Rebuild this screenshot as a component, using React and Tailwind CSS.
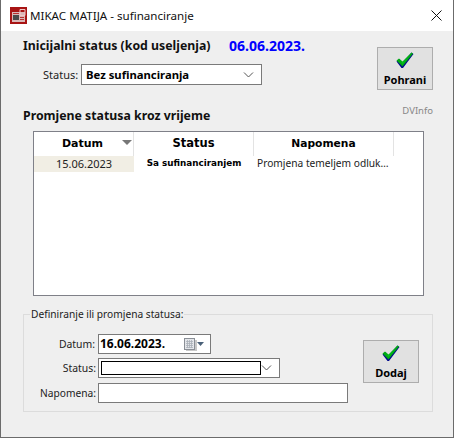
const ui = { fontFamily: '"Noto Sans", "Open Sans", sans-serif' };
const tah = { fontFamily: '"DejaVu Sans", sans-serif' };

function Check() {
  return (
    <svg width="18" height="17" viewBox="0 0 18 17" className="block">
      <path d="M0.5 9.5 L3.5 7 L6.5 10.5 L15.5 0.5 L17.5 2 L7 16 L5.5 16 Z" fill="#000a8c" />
      <path d="M0.5 8.5 L3 6.5 L6.5 9.5 L15.5 0.5 L17 1.5 L6.5 14.5 Z" fill="#00a814" />
      <path d="M3 7 L6.5 10.5 L15 2 L6.5 12 Z" fill="#00c820" />
    </svg>
  );
}

function Chevron() {
  return (
    <svg width="11" height="6" viewBox="0 0 11 6" className="block">
      <path d="M1 0.5 L5.5 5 L10 0.5" fill="none" stroke="#555" strokeWidth="1" />
    </svg>
  );
}

function AppIcon() {
  return (
    <svg width="17" height="17" viewBox="0 0 17 17" className="block">
      <rect width="17" height="17" fill="#a81414" />
      <rect x="2" y="5" width="13" height="10" fill="#d9b8b8" />
      <rect x="3" y="8" width="6" height="5" fill="#4a4a4a" />
      <path d="M10 2.5 H15 V8.5 H10 Z" fill="none" stroke="#f0c8c8" strokeWidth="1" />
      <path d="M10 10.5 H14 M10 12.5 H14 M3 6.5 H9" stroke="#b83030" strokeWidth="1" />
    </svg>
  );
}

function ActionButton({ label, className }) {
  return (
    <button
      className={`flex h-[43px] w-[56px] flex-col items-center border border-[#adadad] bg-[#e1e1e1] pt-[4px] ${className}`}
    >
      <Check />
      <span className="mt-[3px] text-[11px] leading-[15px] font-bold text-[#000]" style={ui}>
        {label}
      </span>
    </button>
  );
}

export default function App() {
  return (
    <div className="flex h-[438px] w-[454px] flex-col border-x border-b border-[#6b6b6b] bg-[#efefef] text-black" style={ui}>
      <div className="flex h-[31px] shrink-0 items-center bg-white pl-[9px]">
        <AppIcon />
        <span className="ml-[3px] text-[11.6px] leading-[16px] text-[#111]">MIKAC MATIJA - sufinanciranje</span>
        <svg width="11" height="11" viewBox="0 0 11 11" className="ml-auto mr-[11px]">
          <path d="M0.5 0.5 L10.5 10.5 M10.5 0.5 L0.5 10.5" stroke="#111" strokeWidth="1" fill="none" />
        </svg>
      </div>

      <div className="flex min-h-0 flex-1 flex-col pl-[22px] pr-[20px]">
        <div className="flex justify-between">
          <div>
            <div className="mt-[7px] flex h-[16px] items-center font-bold leading-[16px]">
              <span className="w-[206px] text-[12.3px] text-[#111]">Inicijalni status (kod useljenja)</span>
              <span className="text-[14px] text-[#0000ff]">06.06.2023.</span>
            </div>
            <div className="mt-[10px] flex items-center pl-[20px]">
              <span className="w-[38px] text-[11px] leading-[14px] text-[#222]">Status:</span>
              <div className="flex h-[21px] w-[181px] items-center justify-between border border-[#7a7a7a] bg-white pl-[4px] pr-[7px]">
                <span className="text-[11.3px] font-bold leading-[14px]">Bez sufinanciranja</span>
                <Chevron />
              </div>
            </div>
          </div>
          <div className="flex flex-col items-end">
            <ActionButton label="Pohrani" className="mt-[16px]" />
            <span className="mt-[14px] text-[9.5px] leading-[13px] text-[#888]">DVInfo</span>
          </div>
        </div>

        <div className="mt-[-9px] text-[12.3px] font-bold leading-[16px] text-[#111]">Promjene statusa kroz vrijeme</div>

        <div className="ml-[10px] mt-[7px] h-[165px] w-[391px] border border-[#7f8088] bg-white">
          <div className="flex h-[24px]">
            <div className="relative flex w-[100px] items-center justify-center border-r border-[#e3e3e3] pr-[2px] text-[11px] font-bold" style={tah}>
              Datum
              <span className="absolute right-[1px] top-[8px] h-0 w-0 border-x-[5px] border-t-[5px] border-x-transparent border-t-[#777]"></span>
            </div>
            <div className="flex w-[120px] items-center justify-center border-r border-[#e3e3e3] text-[11.5px] font-bold" style={tah}>Status</div>
            <div className="flex w-[140px] items-center justify-center border-r border-[#e3e3e3] text-[10.7px] font-bold" style={tah}>Napomena</div>
          </div>
          <div className="flex h-[16px] items-center">
            <div className="flex h-full w-[100px] items-center justify-center bg-[#f1eee4] text-[11px] text-[#222]">15.06.2023</div>
            <div className="flex w-[120px] justify-center text-[8.8px] font-bold" style={tah}>Sa sufinanciranjem</div>
            <div className="pl-[3px] text-[10.2px] text-[#222]">Promjena temeljem odluk…</div>
          </div>
        </div>

        <fieldset className="mt-[11px] h-[105px] w-[410px] border border-[#dcdcdc] pl-[4px]">
          <legend className="ml-[2px] px-[1px] text-[10.2px] leading-[14px] text-[#222]">Definiranje ili promjena statusa:</legend>
          <div className="flex">
            <div className="flex flex-col">
              <div className="mt-[13px] flex items-center">
                <span className="w-[70px] pr-[3px] text-right text-[10.4px] leading-[14px] text-[#222]">Datum:</span>
                <div className="flex h-[20px] w-[113px] items-center border border-[#7a7a7a] bg-white pl-[1px]">
                  <span className="text-[12px] font-bold leading-[14px]">16.06.2023.</span>
                  <svg width="21" height="13" viewBox="0 0 21 13" className="ml-auto mr-[5px]">
                    <rect x="2" y="2" width="11" height="11" fill="#c8c8c8" />
                    <rect x="0.5" y="0.5" width="10" height="11" fill="#e4e6ea" stroke="#8a8f96" />
                    <path d="M2 3.5 H9 M2 5.5 H9 M2 7.5 H9 M2 9.5 H9 M3.5 2 V10 M5.5 2 V10 M7.5 2 V10" stroke="#aab0b8" strokeWidth="0.8" />
                    <path d="M13 4 H20 L16.5 8 Z" fill="#4a6078" />
                  </svg>
                </div>
              </div>
              <div className="mt-[4px] flex items-center">
                <span className="w-[70px] pr-[2px] text-right text-[10.4px] leading-[14px] text-[#222]">Status:</span>
                <div className="flex h-[20px] w-[182px] items-center border border-[#7a7a7a] bg-white pl-[2px] pr-[7px]">
                  <div className="h-[14px] w-[160px] border border-black"></div>
                  <div className="ml-auto"><Chevron /></div>
                </div>
              </div>
              <div className="mt-[5px] flex items-center">
                <span className="w-[70px] pr-[2px] text-right text-[10.2px] leading-[14px] text-[#222]">Napomena:</span>
                <div className="h-[20px] w-[250px] border border-[#7a7a7a] bg-white"></div>
              </div>
            </div>
            <ActionButton label="Dodaj" className="ml-[15px] mt-[19px]" />
          </div>
        </fieldset>
      </div>
    </div>
  );
}
